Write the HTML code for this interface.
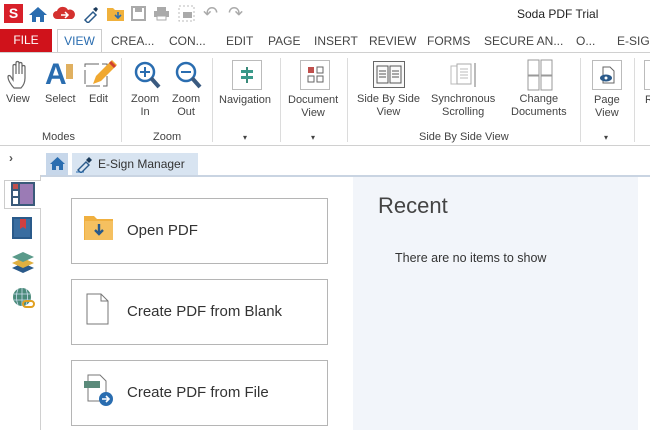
<!DOCTYPE html>
<html><head><style>
*{margin:0;padding:0;box-sizing:border-box}
body{width:650px;height:430px;overflow:hidden;background:#fff;font-family:"Liberation Sans",sans-serif;color:#333;position:relative}
.a{position:absolute}
.t{position:absolute;font-size:12px;color:#444;white-space:nowrap}
.rb{position:absolute;font-size:11px;color:#444;text-align:center;line-height:13px;white-space:nowrap}
.sep{position:absolute;top:58px;width:1px;height:84px;background:#dcdcdc}
.card{position:absolute;left:71px;width:257px;height:66px;border:1px solid #b5b5b5;background:#fff}
.card span{position:absolute;left:55px;top:23px;font-size:15px;color:#333}
</style></head><body>
<!-- title bar -->
<div class="a" style="left:4px;top:4px;width:19px;height:19px;background:#d8202a;color:#fff;font-weight:bold;font-size:14px;text-align:center;line-height:19px">S</div>
<svg class="a" style="left:28px;top:5px" width="20" height="18"><path d="M10 2L1 10h3v7h4v-5h4v5h4v-7h3z" fill="#2a6db0"/></svg>
<svg class="a" style="left:53px;top:6px" width="22" height="14"><path d="M4 13a4 4 0 010-8 6 6 0 0111-1 4 4 0 014 9z" fill="#d4312f"/><path d="M8 9h7M12 6l3 3-3 3" stroke="#fff" stroke-width="1.5" fill="none"/></svg>
<svg class="a" style="left:82px;top:5px" width="16" height="18"><path d="M3 15l8-8 3 3-8 8z" fill="none" stroke="#2a5a8a" stroke-width="1.5"/><path d="M11 4l3-2 2 2-2 3z" fill="#1b3a5a"/></svg>
<svg class="a" style="left:106px;top:5px" width="20" height="18"><path d="M1 3h6l2 2h9v11H1z" fill="#f0b13c"/><path d="M12 7v6M9 10l3 3 3-3" stroke="#2a6db0" stroke-width="1.6" fill="none"/></svg>
<svg class="a" style="left:131px;top:6px" width="15" height="15"><rect x="1" y="1" width="13" height="13" fill="none" stroke="#aaa" stroke-width="2"/><rect x="4" y="2" width="7" height="4" fill="#aaa"/></svg>
<svg class="a" style="left:153px;top:6px" width="17" height="15"><rect x="4" y="1" width="9" height="4" fill="#aaa"/><rect x="1" y="5" width="15" height="6" fill="#aaa"/><rect x="4" y="10" width="9" height="4" fill="#fff" stroke="#aaa"/></svg>
<svg class="a" style="left:178px;top:5px" width="17" height="17"><rect x="1" y="1" width="15" height="15" fill="none" stroke="#bbb" stroke-dasharray="2 2"/><rect x="5" y="7" width="9" height="6" fill="#aaa"/></svg>
<div class="a" style="left:203px;top:3px;font-size:18px;color:#aaa">↶</div>
<div class="a" style="left:228px;top:3px;font-size:18px;color:#aaa">↷</div>
<div class="t" style="left:517px;top:7px;font-size:12px;color:#222">Soda PDF Trial</div>
<!-- tabs -->
<div class="a" style="left:0;top:29px;width:52px;height:23px;background:#d0121b;color:#fff;font-size:12px;text-align:center;line-height:23px">FILE</div>
<div class="a" style="left:57px;top:29px;width:45px;height:24px;border:1px solid #ccc;border-bottom:none;background:#fff;color:#2a6db0;font-size:12px;text-align:center;line-height:22px">VIEW</div>
<div class="a" style="left:0;top:52px;width:650px;height:1px;background:#d0d0d0"></div>
<div class="t" style="left:111px;top:34px">CREA...</div>
<div class="t" style="left:169px;top:34px">CON...</div>
<div class="t" style="left:226px;top:34px">EDIT</div>
<div class="t" style="left:268px;top:34px">PAGE</div>
<div class="t" style="left:314px;top:34px">INSERT</div>
<div class="t" style="left:369px;top:34px">REVIEW</div>
<div class="t" style="left:427px;top:34px">FORMS</div>
<div class="t" style="left:484px;top:34px">SECURE AN...</div>
<div class="t" style="left:576px;top:34px">O...</div>
<div class="t" style="left:617px;top:34px">E-SIGN</div>
<!-- ribbon -->
<svg class="a" style="left:6px;top:60px" width="28" height="30"><path d="M8 28c-3-3-6-8-6-11 0-2 2-2 3 0l2 3V6c0-2 3-2 3 0v8V3c0-2 3-2 3 0v11V4c0-2 3-2 3 0v10V7c0-2 3-2 3 0v11c0 5-2 8-4 10z" fill="none" stroke="#666" stroke-width="1.2"/></svg>
<div class="rb" style="left:6px;top:93px">View</div>
<div class="a" style="left:45px;top:58px;font-size:30px;font-weight:bold;color:#2a6db0;font-family:'Liberation Sans'">A</div>
<div class="a" style="left:66px;top:64px;width:7px;height:15px;background:#e0b060"></div>
<div class="rb" style="left:45px;top:93px">Select</div>
<svg class="a" style="left:83px;top:60px" width="34" height="30"><rect x="2" y="4" width="22" height="22" fill="none" stroke="#666" stroke-dasharray="14 3"/><path d="M10 24l3-8 16-16 5 5-16 16z" fill="#f0a830"/><path d="M27 2l5 5" stroke="#d04030" stroke-width="3"/></svg>
<div class="rb" style="left:89px;top:93px">Edit</div>
<div class="rb" style="left:42px;top:131px">Modes</div>
<div class="sep" style="left:121px"></div>
<svg class="a" style="left:133px;top:60px" width="28" height="30"><circle cx="12" cy="12" r="9" fill="none" stroke="#2a6db0" stroke-width="2.5"/><path d="M12 7v10M7 12h10" stroke="#2a6db0" stroke-width="2"/><path d="M18 18l8 9" stroke="#3a5a80" stroke-width="4"/></svg>
<div class="rb" style="left:131px;top:93px">Zoom<br>In</div>
<svg class="a" style="left:174px;top:60px" width="28" height="30"><circle cx="12" cy="12" r="9" fill="none" stroke="#2a6db0" stroke-width="2.5"/><path d="M7 12h10" stroke="#2a6db0" stroke-width="2"/><path d="M18 18l8 9" stroke="#3a5a80" stroke-width="4"/></svg>
<div class="rb" style="left:172px;top:93px">Zoom<br>Out</div>
<div class="rb" style="left:153px;top:131px">Zoom</div>
<div class="sep" style="left:212px"></div>
<div class="a" style="left:232px;top:60px;width:30px;height:30px;border:1px solid #bbb"></div>
<svg class="a" style="left:239px;top:66px" width="16" height="18"><path d="M8 1v16" stroke="#3a8a7a" stroke-width="2"/><rect x="2" y="4" width="12" height="3" fill="#3a9a8a"/><rect x="2" y="10" width="12" height="3" fill="#3a9a8a"/></svg>
<div class="rb" style="left:219px;top:94px">Navigation</div>
<div class="t" style="left:243px;top:133px;font-size:8px">▾</div>
<div class="sep" style="left:280px"></div>
<div class="a" style="left:300px;top:60px;width:30px;height:30px;border:1px solid #bbb"></div>
<svg class="a" style="left:307px;top:66px" width="17" height="17"><rect x="1" y="1" width="6" height="6" fill="#c0504d"/><rect x="10" y="1" width="6" height="6" fill="none" stroke="#666"/><rect x="1" y="10" width="6" height="6" fill="none" stroke="#666"/><rect x="10" y="10" width="6" height="6" fill="none" stroke="#666"/></svg>
<div class="rb" style="left:288px;top:94px">Document<br>View</div>
<div class="t" style="left:311px;top:133px;font-size:8px">▾</div>
<div class="sep" style="left:347px"></div>
<div class="a" style="left:373px;top:61px;width:32px;height:27px;border:1px solid #666;background:#fafafa"></div>
<svg class="a" style="left:376px;top:65px" width="26" height="20"><rect x="1" y="1" width="11" height="17" fill="none" stroke="#555"/><rect x="14" y="1" width="11" height="17" fill="none" stroke="#555"/><path d="M3 6h7M3 9h7M3 12h7M16 6h7M16 9h7M16 12h7" stroke="#555"/></svg>
<div class="rb" style="left:357px;top:93px">Side By Side<br>View</div>
<svg class="a" style="left:449px;top:60px" width="30" height="30"><rect x="2" y="6" width="12" height="18" fill="none" stroke="#bbb"/><rect x="8" y="4" width="14" height="20" fill="#fff" stroke="#aaa"/><path d="M11 9h8M11 12h8M11 15h8M11 18h8" stroke="#bbb"/><path d="M26 3v24" stroke="#bbb" stroke-width="2"/></svg>
<div class="rb" style="left:431px;top:93px">Synchronous<br>Scrolling</div>
<svg class="a" style="left:527px;top:59px" width="26" height="32"><rect x="1" y="1" width="11" height="15" fill="none" stroke="#999"/><rect x="14" y="1" width="11" height="15" fill="none" stroke="#999"/><rect x="1" y="17" width="11" height="14" fill="none" stroke="#999"/><rect x="14" y="17" width="11" height="14" fill="none" stroke="#999"/></svg>
<div class="rb" style="left:511px;top:93px">Change<br>Documents</div>
<div class="rb" style="left:419px;top:131px">Side By Side View</div>
<div class="sep" style="left:580px"></div>
<div class="a" style="left:592px;top:60px;width:30px;height:30px;border:1px solid #bbb"></div>
<svg class="a" style="left:598px;top:66px" width="18" height="18"><path d="M5 1h7l4 4v12H5z" fill="none" stroke="#666"/><ellipse cx="8" cy="12" rx="6" ry="3.5" fill="#2a5a8a"/><circle cx="8" cy="12" r="1.5" fill="#fff"/></svg>
<div class="rb" style="left:594px;top:94px">Page<br>View</div>
<div class="t" style="left:604px;top:133px;font-size:8px">▾</div>
<div class="sep" style="left:634px"></div>
<div class="a" style="left:644px;top:60px;width:10px;height:30px;border:1px solid #bbb"></div>
<div class="rb" style="left:645px;top:94px">R</div>
<div class="a" style="left:0;top:145px;width:650px;height:1px;background:#d0d0d0"></div>
<!-- sidebar -->
<div class="t" style="left:9px;top:151px;font-size:12px;font-weight:bold;color:#555">›</div>
<div class="a" style="left:40px;top:175px;width:1px;height:255px;background:#d0d0d0"></div>
<div class="a" style="left:4px;top:180px;width:37px;height:29px;border:1px solid #ccc;border-right:none;background:#fff"></div>
<svg class="a" style="left:11px;top:182px" width="24" height="24"><rect x="0" y="0" width="24" height="24" fill="#3a5a7a"/><rect x="2" y="2" width="5" height="5" fill="#c0504d"/><rect x="2" y="9" width="5" height="5" fill="#fff"/><rect x="2" y="16" width="5" height="6" fill="#fff"/><rect x="9" y="2" width="13" height="20" fill="#9b7bb5"/></svg>
<svg class="a" style="left:12px;top:217px" width="20" height="22"><rect x="0" y="0" width="20" height="22" fill="#2a5a8a"/><rect x="2" y="2" width="16" height="18" fill="#3a6da0"/><path d="M8 2v10l3-2 3 2V2z" fill="#d04040"/></svg>
<svg class="a" style="left:11px;top:251px" width="24" height="22"><path d="M12 12L1 17l11 5 11-5z" fill="#2a5a8a"/><path d="M12 7L1 12l11 5 11-5z" fill="#e0b040"/><path d="M12 1L1 6l11 5 11-5z" fill="#5a9a8a"/></svg>
<svg class="a" style="left:12px;top:287px" width="24" height="22"><circle cx="10" cy="10" r="9" fill="#4a8a7a"/><path d="M2 7h16M2 13h16M10 1v18M6 2c-2 5-2 11 0 16M14 2c2 5 2 11 0 16" stroke="#cde" stroke-width="0.8" fill="none"/><rect x="11" y="14" width="11" height="6" rx="3" fill="none" stroke="#e0a020" stroke-width="2"/></svg>
<!-- doc tabs -->
<div class="a" style="left:46px;top:153px;width:22px;height:23px;background:#c7d7ea"></div>
<svg class="a" style="left:49px;top:156px" width="17" height="15"><path d="M8.5 1L1 8h2v6h4v-4h3v4h4V8h2z" fill="#2a6db0"/></svg>
<div class="a" style="left:72px;top:153px;width:126px;height:23px;background:#d8e4f1"></div>
<svg class="a" style="left:75px;top:155px" width="18" height="18"><path d="M3 15l8-8 3 3-8 8z" fill="none" stroke="#2a5a8a" stroke-width="1.4"/><path d="M11 5l3-3 3 3-3 3z" fill="#1b3a5a"/><path d="M1 17h8" stroke="#2a6db0"/></svg>
<div class="t" style="left:98px;top:157px;font-size:12px;color:#333">E-Sign Manager</div>
<div class="a" style="left:41px;top:175px;width:609px;height:2px;background:#c9d4e2"></div>
<!-- cards -->
<div class="card" style="top:198px"><svg class="a" style="left:11px;top:14px" width="32" height="28"><path d="M1 3h10l3 3h16v21H1z" fill="#f0b040"/><path d="M2 8h28v19H2z" fill="#f5c060"/><path d="M16 11v10M12 17l4 4 4-4" stroke="#2a5a8a" stroke-width="2.4" fill="none"/></svg><span>Open PDF</span></div>
<div class="card" style="top:279px"><svg class="a" style="left:14px;top:13px" width="24" height="32"><path d="M1 1h14l7 7v23H1z M15 1v7h7" fill="#fff" stroke="#777"/></svg><span>Create PDF from Blank</span></div>
<div class="card" style="top:360px"><svg class="a" style="left:11px;top:12px" width="32" height="34"><path d="M5 2h12l6 6v20H5z" fill="#fff" stroke="#777"/><rect x="1" y="8" width="16" height="7" fill="#5a8a7a"/><circle cx="23" cy="26" r="7" fill="#2a6db0"/><path d="M19 26h7M23 23l3 3-3 3" stroke="#fff" stroke-width="1.6" fill="none"/></svg><span>Create PDF from File</span></div>
<!-- recent -->
<div class="a" style="left:353px;top:177px;width:285px;height:253px;background:#f2f5fa"></div>
<div class="t" style="left:378px;top:193px;font-size:22px;color:#444">Recent</div>
<div class="t" style="left:395px;top:251px;font-size:12.5px;color:#333">There are no items to show</div>
</body></html>
